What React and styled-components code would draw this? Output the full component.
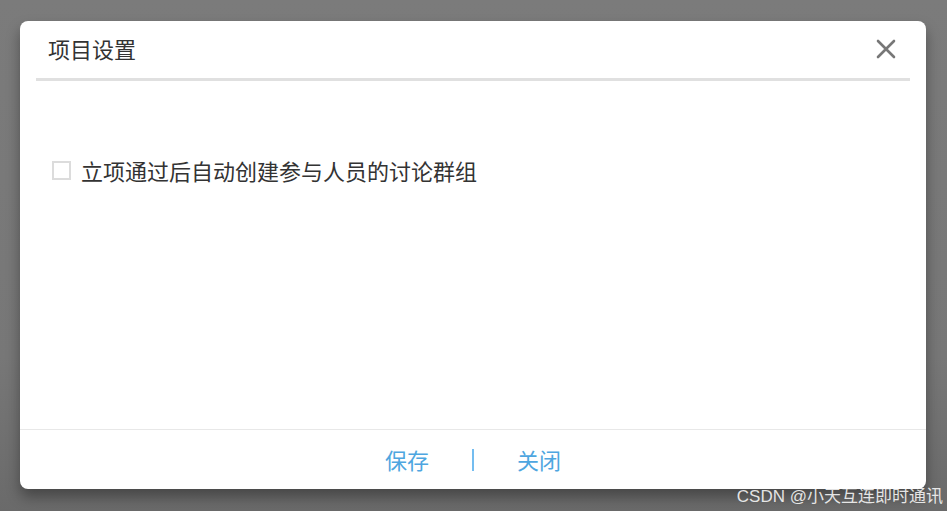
import React, { useState } from "react";
import styled, { createGlobalStyle } from "styled-components";

const GlobalStyle = createGlobalStyle`
  html, body {
    margin: 0;
    padding: 0;
  }
  body {
    font-family: "Liberation Sans", "Noto Sans CJK SC", sans-serif;
    background: #777;
  }
`;

const App = () => {
  const [checked, setChecked] = useState(false);
  return (
    <Page>
      <GlobalStyle />
      <Dialog>
        <Header>
          <Title>项目设置</Title>
          <CloseButton aria-label="close">
            <svg width="20" height="20" viewBox="0 0 20 20">
              <path d="M2 2 L18 18 M18 2 L2 18" stroke="#777" strokeWidth="2.6" strokeLinecap="round" />
            </svg>
          </CloseButton>
        </Header>
        <Body>
          <Option onClick={() => setChecked(!checked)}>
            <Box checked={checked} />
            <span>立项通过后自动创建参与人员的讨论群组</span>
          </Option>
        </Body>
        <Footer>
          <Action>保存</Action>
          <Divider />
          <Action>关闭</Action>
        </Footer>
      </Dialog>
      <Watermark>CSDN @小天互连即时通讯</Watermark>
    </Page>
  );
};

export default App;

const Page = styled.div`
  position: relative;
  width: 947px;
  height: 511px;
  box-sizing: border-box;
  padding: 21px 21px 0 20px;
  background: linear-gradient(#7b7b7b 0%, #777 70%, #6a6a6a 100%);
  overflow: hidden;
`;

const Dialog = styled.div`
  width: 906px;
  height: 468px;
  background: #fff;
  border-radius: 8px;
  display: flex;
  flex-direction: column;
  box-shadow: 0 8px 14px rgba(0, 0, 0, 0.35);
`;

const Header = styled.div`
  margin: 0 16px;
  height: 57px;
  border-bottom: 3px solid #e0e0e0;
  display: flex;
  align-items: center;
  justify-content: space-between;
  padding: 0 14px 0 12px;
`;

const Title = styled.div`
  font-family: "Noto Sans CJK SC", sans-serif;
  font-size: 22px;
  color: #333;
  margin-top: -4px;
`;

const CloseButton = styled.button`
  border: none;
  background: none;
  padding: 0;
  width: 20px;
  height: 20px;
  cursor: pointer;
  display: flex;
  margin-top: -2px;
`;

const Body = styled.div`
  flex: 1;
  padding: 73px 32px 0;
`;

const Option = styled.label`
  display: flex;
  align-items: center;
  gap: 10px;
  font-family: "Noto Sans CJK SC", sans-serif;
  font-size: 22px;
  color: #333;
  cursor: pointer;
`;

const Box = styled.span`
  width: 15px;
  height: 15px;
  border: 2px solid #dcdcdc;
  background: ${({ checked }) => (checked ? "#4ea6e0" : "#fff")};
  flex-shrink: 0;
`;

const Footer = styled.div`
  height: 59px;
  border-top: 1px solid #e8e8e8;
  display: flex;
  align-items: center;
  justify-content: center;
  gap: 43px;
`;

const Action = styled.button`
  border: none;
  background: none;
  padding: 0;
  font-family: "Noto Sans CJK SC", sans-serif;
  font-size: 22px;
  color: #4ea6e0;
  cursor: pointer;
  margin-top: -2px;
`;

const Divider = styled.span`
  width: 2px;
  height: 22px;
  background: #74bdf0;
`;

const Watermark = styled.div`
  position: absolute;
  right: 4px;
  bottom: 4px;
  font-family: "Liberation Sans", "Noto Sans CJK SC", sans-serif;
  font-size: 17px;
  color: rgba(255, 255, 255, 0.85);
  letter-spacing: 0;
`;
